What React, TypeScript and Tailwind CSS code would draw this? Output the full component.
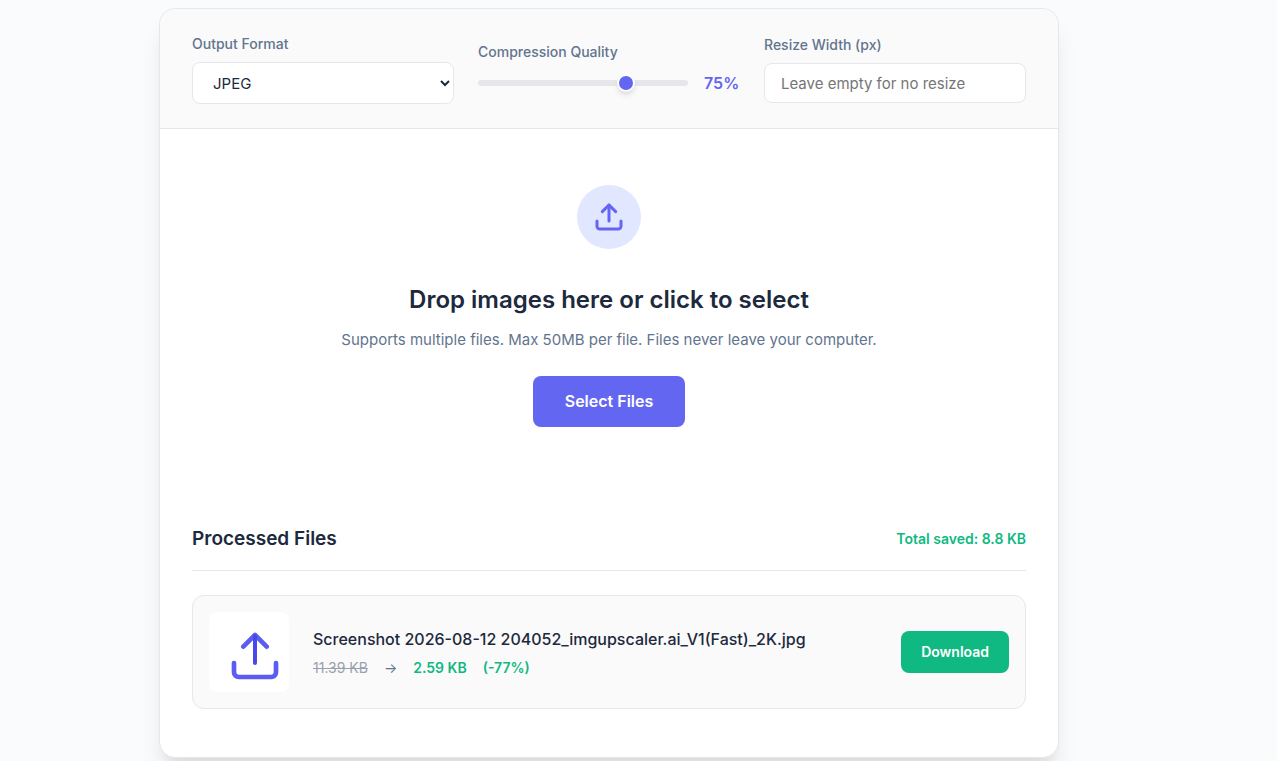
import React, { useState } from "react";
import { Upload } from "lucide-react";

const files = [
  {
    name: "Screenshot 2026-08-12 204052_imgupscaler.ai_V1(Fast)_2K.jpg",
    before: "11.39 KB",
    after: "2.59 KB",
    percent: "(-77%)",
  },
];

function Thumbnail() {
  return (
    <div className="flex size-20 shrink-0 items-end justify-end rounded-lg bg-white pr-1.5 pb-2">
      <svg
        className="size-14"
        viewBox="0 0 24 24"
        fill="none"
        stroke="#5b5cf0"
        strokeWidth="2"
        strokeLinecap="round"
        strokeLinejoin="round"
      >
        <path d="M21 15v4a2 2 0 0 1-2 2H5a2 2 0 0 1-2-2v-4" />
        <path d="M17 8l-5-5-5 5" />
        <path d="M12 3.5V15" stroke="#4a47ea" strokeWidth="1.7" />
      </svg>
    </div>
  );
}

function Controls() {
  const [format, setFormat] = useState("jpeg");
  const [quality, setQuality] = useState(75);
  const [width, setWidth] = useState("");

  return (
    <div className="grid grid-cols-3 items-center gap-6 rounded-t-2xl border-b border-gray-200 bg-[#fafafa] px-8 py-6">
      <div className="flex flex-col gap-2">
        <label htmlFor="format" className="text-sm leading-[21px] font-medium text-slate-500">
          Output Format
        </label>
        <select
          id="format"
          value={format}
          onChange={(e) => setFormat(e.target.value)}
          className="h-[42px] w-full rounded-lg border border-gray-200 bg-white px-4 text-[15px] text-slate-800"
        >
          <option value="jpeg">JPEG</option>
          <option value="png">PNG</option>
          <option value="webp">WebP</option>
        </select>
      </div>
      <div className="flex flex-col gap-2">
        <label htmlFor="quality" className="text-sm leading-[21px] font-medium text-slate-500">
          Compression Quality
        </label>
        <div className="flex items-center gap-4">
          <input
            id="quality"
            type="range"
            min={10}
            max={100}
            value={quality}
            onChange={(e) => setQuality(Number(e.target.value))}
            className="h-1.5 min-w-0 flex-1 appearance-none rounded-full bg-gray-200 [&::-webkit-slider-thumb]:size-[18px] [&::-webkit-slider-thumb]:appearance-none [&::-webkit-slider-thumb]:rounded-full [&::-webkit-slider-thumb]:border-2 [&::-webkit-slider-thumb]:border-white [&::-webkit-slider-thumb]:bg-[#6366f1] [&::-webkit-slider-thumb]:shadow-md"
          />
          <span className="w-9 text-base leading-[26px] font-semibold text-[#6366f1]">
            {quality}%
          </span>
        </div>
      </div>
      <div className="flex flex-col gap-2">
        <label htmlFor="width" className="text-sm leading-[21px] font-medium text-slate-500">
          Resize Width (px)
        </label>
        <input
          id="width"
          type="text"
          value={width}
          onChange={(e) => setWidth(e.target.value)}
          placeholder="Leave empty for no resize"
          className="h-10 w-full rounded-lg border border-gray-200 bg-white px-4 text-[15px] text-slate-800 placeholder:text-[#757575]"
        />
      </div>
    </div>
  );
}

function DropZone() {
  return (
    <div className="flex flex-col items-center px-8 pt-14 pb-20 text-center">
      <div className="flex size-16 items-center justify-center rounded-full bg-[#e0e7ff]">
        <Upload size={32} strokeWidth={2.25} className="text-[#6366f1]" />
      </div>
      <h2 className="mt-8 text-2xl leading-[38px] font-semibold text-slate-800">
        Drop images here or click to select
      </h2>
      <p className="mt-2 text-[15px] leading-[26px] text-slate-500">
        Supports multiple files. Max 50MB per file. Files never leave your computer.
      </p>
      <button className="mt-[23px] rounded-lg bg-[#6366f1] px-8 py-3.5 text-base leading-[23px] font-semibold text-white">
        Select Files
      </button>
    </div>
  );
}

function ProcessedFiles() {
  return (
    <div className="px-8 pt-4 pb-12">
      <div className="flex items-center justify-between border-b border-gray-200 pb-4">
        <h3 className="text-[19px] leading-[31px] font-semibold text-slate-800">Processed Files</h3>
        <span className="text-sm leading-[23px] font-semibold text-[#10b981]">Total saved: 8.8 KB</span>
      </div>
      <ul className="mt-6 flex flex-col gap-4">
        {files.map((file) => (
          <li
            key={file.name}
            className="flex items-center gap-6 rounded-xl border border-gray-200 bg-[#fafafa] p-4"
          >
            <Thumbnail />
            <div className="min-w-0 flex-1">
              <p className="truncate text-base leading-[26px] font-medium text-slate-800">{file.name}</p>
              <div className="mt-1 flex items-center gap-4 text-sm leading-[23px] text-slate-500">
                <span className="text-gray-400 line-through">{file.before}</span>
                <span>→</span>
                <span className="font-semibold text-[#10b981]">{file.after}</span>
                <span className="font-semibold text-[#10b981]">{file.percent}</span>
              </div>
            </div>
            <button className="rounded-lg bg-[#10b981] px-5 py-2.5 text-sm leading-[22px] font-semibold text-white">
              Download
            </button>
          </li>
        ))}
      </ul>
    </div>
  );
}

export default function App() {
  return (
    <main className="flex min-h-screen items-start justify-center bg-[#fafbfd] pt-2 pr-[59px] font-['Inter',sans-serif]">
      <div className="w-full max-w-[900px] rounded-2xl border border-gray-200 bg-white shadow-[0_20px_25px_-5px_rgba(0,0,0,0.1),0_10px_10px_-5px_rgba(0,0,0,0.04)]">
        <Controls />
        <DropZone />
        <ProcessedFiles />
      </div>
    </main>
  );
}
